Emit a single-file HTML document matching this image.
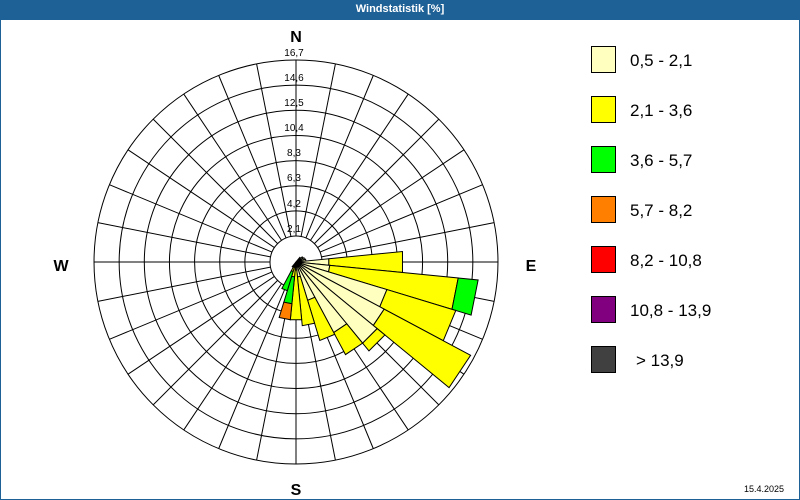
<!DOCTYPE html>
<html><head><meta charset="utf-8"><style>
html,body{margin:0;padding:0;background:#fff;}
#wrap{position:relative;width:800px;height:500px;overflow:hidden;background:#fff;font-family:"Liberation Sans",sans-serif;}
#hdr{position:absolute;left:0;top:0;width:800px;height:20px;background:#1e6196;color:#fff;font-size:11px;font-weight:bold;text-align:center;line-height:19px;}
#frame{position:absolute;left:0;top:20px;width:798px;height:479px;border:1px solid #1e6196;border-top:none;}
svg{position:absolute;left:0;top:0;}
</style></head><body><div id="wrap">
<div id="hdr">Windstatistik [%]</div>
<div id="frame"></div>
<svg id="s" width="800" height="500" xmlns="http://www.w3.org/2000/svg" font-family="Liberation Sans, sans-serif">
<g id="grid" stroke="#000" stroke-width="1" fill="none"></g>
<g id="bars" stroke="#000" stroke-width="1"></g>
<g font-size="10" fill="#000" text-anchor="middle">
<text x="294" y="56">16,7</text>
<text x="294" y="81">14,6</text>
<text x="294" y="106">12,5</text>
<text x="294" y="131">10,4</text>
<text x="294" y="156">8,3</text>
<text x="294" y="181">6,3</text>
<text x="294" y="207">4,2</text>
<text x="294" y="232">2,1</text>
</g>
<g font-size="16" font-weight="bold" fill="#000" text-anchor="middle">
<text x="296" y="42">N</text>
<text x="61" y="271">W</text>
<text x="531" y="271">E</text>
<text x="296" y="495">S</text>
</g>
<g stroke="#000" stroke-width="1">
<rect x="591.5" y="46.5" width="24" height="26" fill="#ffffc0"/>
<rect x="591.5" y="96.5" width="24" height="26" fill="#ffff00"/>
<rect x="591.5" y="146.5" width="24" height="26" fill="#00ff00"/>
<rect x="591.5" y="196.5" width="24" height="26" fill="#ff8000"/>
<rect x="591.5" y="246.5" width="24" height="26" fill="#ff0000"/>
<rect x="591.5" y="296.5" width="24" height="26" fill="#800080"/>
<rect x="591.5" y="346.5" width="24" height="26" fill="#404040"/>
</g>
<g font-size="17" fill="#000">
<text x="630" y="66">0,5 - 2,1</text>
<text x="630" y="116">2,1 - 3,6</text>
<text x="630" y="166">3,6 - 5,7</text>
<text x="630" y="216">5,7 - 8,2</text>
<text x="630" y="266">8,2 - 10,8</text>
<text x="630" y="316">10,8 - 13,9</text>
<text x="636" y="366">&gt; 13,9</text>
</g>
<text x="784" y="492" font-size="9" text-anchor="end" fill="#000">15.4.2025</text>
</svg>
</div>
<script>
var cx=296,cy=262,NS="http://www.w3.org/2000/svg";
var g=document.getElementById('grid'),b=document.getElementById('bars');
function el(p,t,a){var e=document.createElementNS(NS,t);for(var k in a)e.setAttribute(k,a[k]);p.appendChild(e);return e;}
for(var k=0;k<8;k++){el(g,'circle',{cx:cx,cy:cy,r:26+25.14*k});}
for(var i=0;i<32;i++){var a=i*11.25*Math.PI/180;el(g,'line',{x1:cx+26*Math.sin(a),y1:cy-26*Math.cos(a),x2:cx+202*Math.sin(a),y2:cy-202*Math.cos(a)});}
function pt(r,deg){var a=deg*Math.PI/180;return (cx+r*Math.sin(a)).toFixed(2)+','+(cy-r*Math.cos(a)).toFixed(2);}
function sec(r1,r2,c,col){var a1=c-5.625,a2=c+5.625;var d;
if(r1<=0.5)d='M'+cx+','+cy+' L'+pt(r2,a1)+' L'+pt(r2,a2)+' Z';
else d='M'+pt(r1,a1)+' L'+pt(r2,a1)+' L'+pt(r2,a2)+' L'+pt(r1,a2)+' Z';
el(b,'path',{d:d,fill:col});}
var C=['#ffffc0','#ffff00','#00ff00','#ff8000'];
var data=[[45,[6]],[56.25,[8]],[67.5,[9]],[78.75,[10]],
[90,[33,107]],[101.25,[34,163,183]],[112.5,[95,167]],[123.75,[100,198]],
[135,[105,115]],[146.25,[80,105]],[157.5,[40,82]],[168.75,[15,64]],[180,[8,58]],
[191.25,[5,15,42,58]],[202.5,[5,10,30]],[213.75,[6]]];
data.forEach(function(x){var prev=0;x[1].forEach(function(r,i){sec(prev,r,x[0],C[i]);prev=r;});});
</script>
</body></html>
